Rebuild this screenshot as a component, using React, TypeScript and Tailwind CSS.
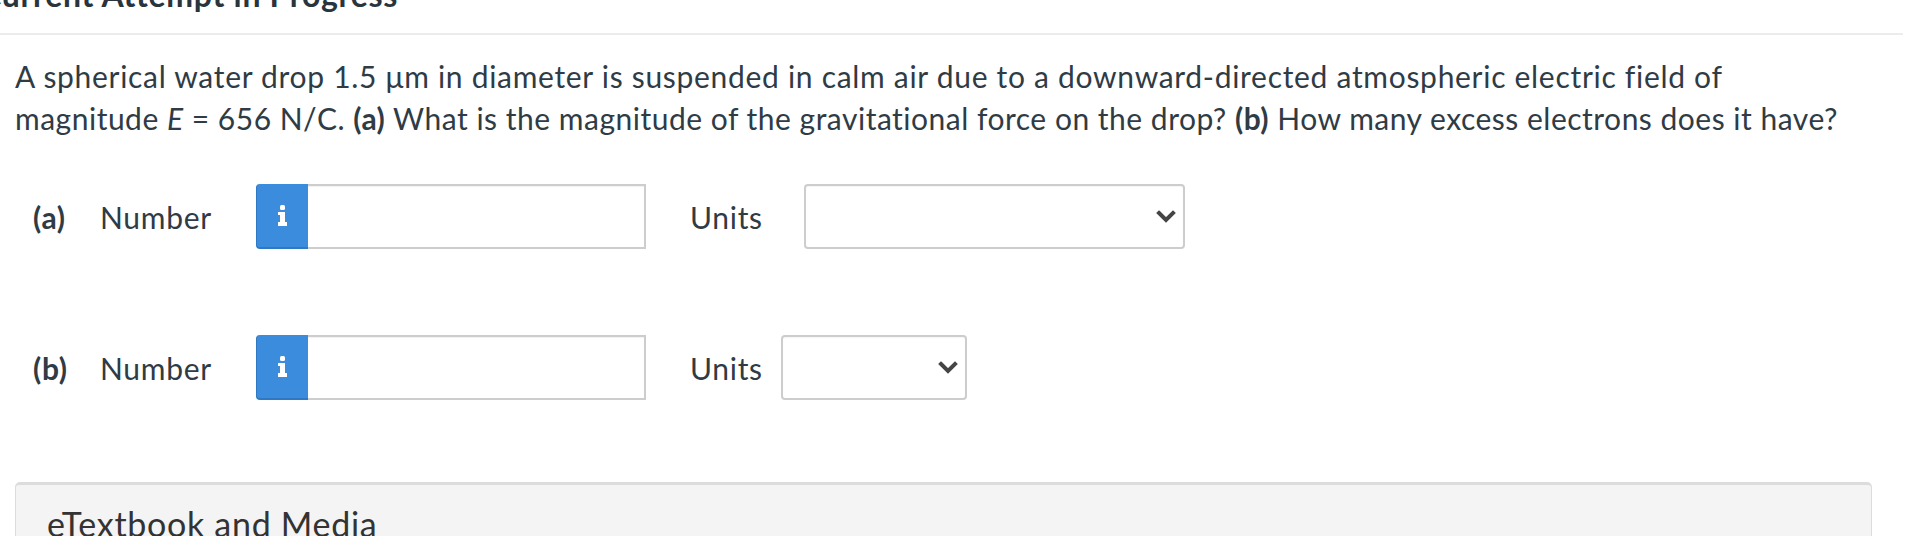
function InfoIcon() {
  return (
    <svg width="11" height="21" viewBox="0 0 11 21" fill="white">
      <rect x="3" y="0" width="5" height="5" rx="1.5" />
      <path d="M1 7 H8 V17 H10 V21 H1 V17 H3 V10 H1 Z" />
    </svg>
  );
}

function Chevron() {
  return (
    <svg width="20" height="13" viewBox="0 0 20 13" fill="none">
      <polyline points="3,3 10,10 17,3" stroke="#454545" strokeWidth="4" strokeLinecap="square" />
    </svg>
  );
}

type RowProps = {
  part: string;
  selectGap: string;
  selectWidth: string;
};

function AnswerRow({ part, selectGap, selectWidth }: RowProps) {
  return (
    <div className="flex h-[65px] items-center">
      <span className="ml-[33px] w-[67px] font-bold">{part}</span>
      <span className="w-[156px]">Number</span>
      <div className="flex h-[65px] w-[390px]">
        <button className="flex w-[52px] shrink-0 items-center justify-center rounded-l-[4px] border-b-2 border-l border-[#2f78c4] bg-[#3b8cdc]">
          <InfoIcon />
        </button>
        <input
          type="text"
          className="min-w-0 flex-1 border-2 border-l-0 border-[#cdcdcd] bg-white shadow-[inset_0_1px_1px_rgba(0,0,0,0.06)] outline-none"
        />
      </div>
      <span className="ml-[44px]">Units</span>
      <div
        className={`${selectGap} ${selectWidth} flex h-[65px] shrink-0 items-center justify-end rounded-[4px] border-2 border-[#cdcdcd] bg-white pr-[7px] shadow-[inset_0_1px_1px_rgba(0,0,0,0.04)]`}
      >
        <Chevron />
      </div>
    </div>
  );
}

export default function App() {
  return (
    <div className="h-[536px] w-[1908px] overflow-hidden bg-white font-['Lato',_'Liberation_Sans',_sans-serif] text-[30px] leading-[42px] tracking-[0.7px] text-[#2f3b45]">
      <div className="mr-[5px] h-[35px] overflow-hidden border-b-2 border-[#ececec]">
        <h2 className="-ml-[20px] -mt-[22px] whitespace-nowrap text-[32px] font-bold leading-[34px] text-[#2a343d]">
          Current Attempt in Progress
        </h2>
      </div>

      <p className="mt-[20px] whitespace-nowrap pl-[15px]">
        A spherical water drop 1.5 μm in diameter is suspended in calm air due to a downward-directed atmospheric
        electric field of
        <br />
        <span className="tracking-[0.5px]">
          magnitude <i>E</i> = 656 N/C. <b>(a)</b> What is the magnitude of the gravitational force on the drop?{' '}
          <b>(b)</b> How many excess electrons does it have?
        </span>
      </p>

      <div className="mt-[45px]">
        <AnswerRow part="(a)" selectGap="ml-[41px]" selectWidth="w-[381px]" />
      </div>
      <div className="mt-[86px]">
        <AnswerRow part="(b)" selectGap="ml-[18px]" selectWidth="w-[186px]" />
      </div>

      <div className="ml-[15px] mt-[82px] h-[80px] w-[1857px] rounded-t-[5px] border border-t-[3px] border-[#dcdcdc] bg-[#f4f4f4] px-[31px] pt-[18px] text-[34px] text-[#333]">
        eTextbook and Media
      </div>
    </div>
  );
}
